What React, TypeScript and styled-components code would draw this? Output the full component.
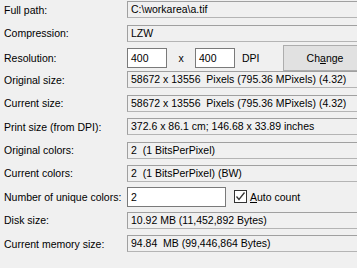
import React from 'react'
import styled, {createGlobalStyle} from 'styled-components'

const GlobalStyle = createGlobalStyle`
  html, body {
    margin: 0;
    padding: 0;
    background: #f0f0f0;
    overflow: hidden;
  }
  body {
    font-family: "Liberation Sans", Arial, sans-serif;
    font-size: 10.5px;
    color: #000000;
  }
`

type InfoRow = {label: string; value: string}

const topRows: InfoRow[] = [
  {label: 'Full path:', value: 'C:\\workarea\\a.tif'},
  {label: 'Compression:', value: 'LZW'},
]

const midRows: InfoRow[] = [
  {label: 'Original size:', value: '58672 x 13556  Pixels (795.36 MPixels) (4.32)'},
  {label: 'Current size:', value: '58672 x 13556  Pixels (795.36 MPixels) (4.32)'},
  {label: 'Print size (from DPI):', value: '372.6 x 86.1 cm; 146.68 x 33.89 inches'},
  {label: 'Original colors:', value: '2  (1 BitsPerPixel)'},
  {label: 'Current colors:', value: '2  (1 BitsPerPixel) (BW)'},
]

const bottomRows: InfoRow[] = [
  {label: 'Disk size:', value: '10.92 MB (11,452,892 Bytes)'},
  {label: 'Current memory size:', value: '94.84  MB (99,446,864 Bytes)'},
]

export default function App() {
  return (
    <>
      <GlobalStyle />
      <Dialog>
        {topRows.map((r) => (
          <Row key={r.label}>
            <Label>{r.label}</Label>
            <ReadOnly>{r.value}</ReadOnly>
          </Row>
        ))}
        <Row>
          <Label>Resolution:</Label>
          <Inline>
            <Edit $width={40}>400</Edit>
            <Times>x</Times>
            <Edit $width={40}>400</Edit>
            <Unit>DPI</Unit>
            <Button>
              Ch<u>a</u>nge
            </Button>
          </Inline>
        </Row>
        {midRows.map((r) => (
          <Row key={r.label}>
            <Label>{r.label}</Label>
            <ReadOnly>{r.value}</ReadOnly>
          </Row>
        ))}
        <Row>
          <Label>Number of unique colors:</Label>
          <Inline>
            <Edit $width={99}>2</Edit>
            <Check>
              <Box>
                <svg width="11" height="11" viewBox="0 0 11 11">
                  <path d="M1.5 5.5 L4 8.5 L9.5 1.5" fill="none" stroke="#333" strokeWidth="1.3" />
                </svg>
              </Box>
              <span>
                <u>A</u>uto count
              </span>
            </Check>
          </Inline>
        </Row>
        {bottomRows.map((r) => (
          <Row key={r.label}>
            <Label>{r.label}</Label>
            <ReadOnly>{r.value}</ReadOnly>
          </Row>
        ))}
      </Dialog>
    </>
  )
}

const Dialog = styled.div`
  display: grid;
  grid-auto-rows: 23.4px;
  margin-top: -2px;
  width: 357px;
  overflow: hidden;
`
const Row = styled.div`
  display: grid;
  grid-template-columns: 123px 240px;
  align-items: center;
  padding-left: 4px;
`
const Label = styled.span`
  white-space: nowrap;
`
const ReadOnly = styled.div`
  height: 17px;
  box-sizing: border-box;
  border: 1px solid #a0a0a0;
  border-bottom-color: #b4b4b4;
  background: #f0f0f0;
  padding-left: 3px;
  line-height: 15px;
  white-space: pre;
`
const Inline = styled.div`
  display: flex;
  align-items: center;
`
const Edit = styled.div<{$width: number}>`
  width: ${(p) => p.$width}px;
  height: 20px;
  box-sizing: border-box;
  border: 1px solid #7a7a7a;
  background: #ffffff;
  padding-left: 3px;
  line-height: 18px;
`
const Times = styled.span`
  width: 28px;
  text-align: center;
`
const Unit = styled.span`
  margin-left: 7px;
  width: 41px;
`
const Button = styled.div`
  flex: none;
  width: 84px;
  height: 26px;
  box-sizing: border-box;
  border: 1px solid #adadad;
  background: #e1e1e1;
  display: flex;
  align-items: center;
  justify-content: center;
`
const Check = styled.div`
  display: flex;
  align-items: center;
  gap: 3px;
  margin-left: 8px;
`
const Box = styled.div`
  width: 13px;
  height: 13px;
  box-sizing: border-box;
  border: 1px solid #333333;
  background: #ffffff;
  display: flex;
  align-items: center;
  justify-content: center;
`
